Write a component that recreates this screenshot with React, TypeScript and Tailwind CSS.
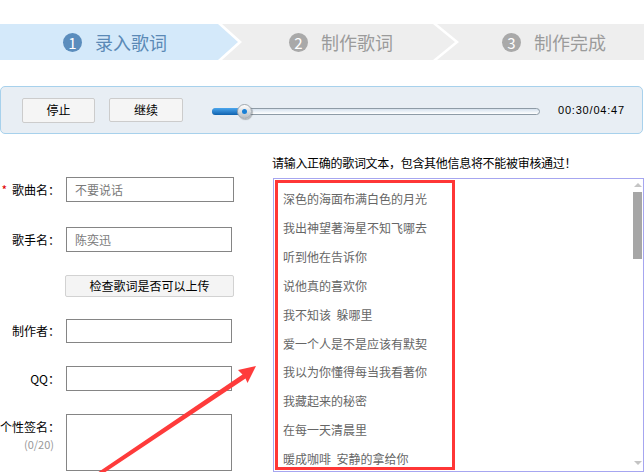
import React from "react";

const lyrics = [
  "深色的海面布满白色的月光",
  "我出神望著海星不知飞哪去",
  "听到他在告诉你",
  "说他真的喜欢你",
  "我不知该  躲哪里",
  "爱一个人是不是应该有默契",
  "我以为你懂得每当我看著你",
  "我藏起来的秘密",
  "在每一天清晨里",
  "暖成咖啡  安静的拿给你",
];

function Row({
  label,
  required,
  inputW,
  value,
  mt,
  h,
}: {
  label: string;
  required?: boolean;
  inputW: number;
  value?: string;
  mt: string;
  h: string;
}) {
  return (
    <div className={`flex items-center ${mt}`}>
      <div className="w-[60px] text-right text-[12px] leading-[16px] text-black whitespace-nowrap">
        {required && <span className="text-[#e00000] mr-[5px]">*</span>}
        {label}
      </div>
      <div
        className={`ml-[6px] ${h} border border-[#858585] bg-white flex items-center pl-[8px] text-[12px] text-[#7a7a7a]`}
        style={{ width: inputW }}
      >
        {value}
      </div>
    </div>
  );
}

export default function App() {
  return (
    <div
      className="relative w-[644px] h-[472px] overflow-hidden bg-white"
      style={{ fontFamily: '"Noto Sans CJK SC", "Noto Sans", sans-serif' }}
    >
      {/* Steps */}
      <div className="mt-[24px] h-[36px] flex">
        <div className="w-[238px] h-full shrink-0 bg-[#d4e9fa] [clip-path:polygon(0_0,218px_0,238px_50%,218px_100%,0_100%)] flex items-center pl-[63px]">
          <div className="w-[19px] h-[19px] rounded-full bg-[#5b8dbd] text-white text-[15px] flex items-center justify-center leading-none">
            1
          </div>
          <span className="ml-[13px] text-[18px] text-[#5b89b6] leading-none">录入歌词</span>
        </div>
        <div className="ml-[-16px] w-[233px] h-full shrink-0 bg-[#eeeeee] [clip-path:polygon(0_0,211px_0,233px_50%,211px_100%,0_100%,20px_50%)] flex items-center pl-[67px]">
          <div className="w-[19px] h-[19px] rounded-full bg-[#a9a9a9] text-white text-[15px] flex items-center justify-center leading-none">
            2
          </div>
          <span className="ml-[13px] text-[18px] text-[#9b9b9b] leading-none">制作歌词</span>
        </div>
        <div className="ml-[-18px] flex-1 h-full bg-[#eeeeee] [clip-path:polygon(0_0,100%_0,100%_100%,0_100%,22px_50%)] flex items-center pl-[65px]">
          <div className="w-[19px] h-[19px] rounded-full bg-[#a9a9a9] text-white text-[15px] flex items-center justify-center leading-none">
            3
          </div>
          <span className="ml-[13px] text-[18px] text-[#9b9b9b] leading-none">制作完成</span>
        </div>
      </div>

      {/* Control panel */}
      <div className="mt-[26px] mr-[1px] h-[48px] rounded-[5px] border border-[#a7d1ec] bg-[#e8eef4] flex items-center pl-[21px]">
        <button className="w-[73px] h-[25px] bg-[#f5f5f5] border border-[#cccccc] rounded-[2px] text-[12px] text-black">
          停止
        </button>
        <button className="ml-[14px] w-[74px] h-[24px] bg-[#f5f5f5] border border-[#cccccc] rounded-[2px] text-[12px] text-black">
          继续
        </button>
        <div className="ml-[29px] relative w-[328px] h-[7px] mt-[2px]">
          <div className="absolute inset-0 rounded-full border border-[#8e9ba6] bg-linear-to-b from-[#d6e2ee] to-[#ffffff]" />
          <div className="absolute left-0 top-0 h-[7px] w-[34px] rounded-l-full bg-linear-to-b from-[#4aa6ee] to-[#0d62ae]" />
          <div className="absolute left-[25px] top-[-4px] w-[15px] h-[15px] rounded-full border border-[#a1a8ae] bg-linear-to-b from-[#ffffff] to-[#b7bcc1] shadow-[1px_1px_1px_rgba(0,0,0,0.25)] flex items-center justify-center">
            <div className="w-[5px] h-[5px] rounded-full bg-[#1a80d6]" />
          </div>
        </div>
        <span
          className="ml-[18px] text-[11px] tracking-[0.8px] text-black"
          style={{ fontFamily: '"Liberation Sans", sans-serif' }}
        >
          00:30/04:47
        </span>
      </div>

      {/* Main */}
      <div className="flex">
        <div className="w-[272px] shrink-0 flex flex-col">
          <Row label="歌曲名：" required inputW={168} value="不要说话" mt="mt-[43px]" h="h-[25px]" />
          <Row label="歌手名：" inputW={166} value="陈奕迅" mt="mt-[25px]" h="h-[25px]" />
          <div className="mt-[23px] ml-[65px] flex">
            <button className="w-[169px] h-[22px] bg-[#f4f4f4] border border-[#d2d2d2] rounded-[2px] text-[12px] text-black leading-none">
              检查歌词是否可以上传
            </button>
          </div>
          <Row label="制作者：" inputW={166} mt="mt-[22px]" h="h-[24px]" />
          <Row label="QQ：" inputW={166} mt="mt-[23px]" h="h-[25px]" />
          <div className="flex mt-[23px]">
            <div className="w-[60px] flex flex-col items-end pt-[5px]">
              <span className="text-[12px] leading-[16px] text-black whitespace-nowrap">个性签名：</span>
              <span className="text-[11px] leading-[14px] text-[#999999] pr-[6px] mt-[2px]">(0/20)</span>
            </div>
            <div className="ml-[6px] w-[166px] h-[57px] border border-[#858585] bg-white" />
          </div>
        </div>

        <div className="flex-1 flex flex-col">
          <div className="mt-[21px] text-[12px] leading-[16px] text-black whitespace-nowrap tracking-[-0.3px]">
            请输入正确的歌词文本，包含其他信息将不能被审核通过！
          </div>
          <div className="mt-[7px] ml-[1px] h-[294px] border border-[#a6a6f0] bg-white flex">
            <div className="ml-[1px] mt-[1px] w-[180px] h-[290px] border-[3px] border-[#ff3636] pl-[5px] pt-[2px] flex flex-col">
              {lyrics.map((l) => (
                <div key={l} className="text-[12px] leading-[28.9px] text-[#666666] whitespace-pre">
                  {l}
                </div>
              ))}
            </div>
            <div className="flex-1" />
            <div className="w-[9px] mr-[1px] flex flex-col items-center">
              <div className="mt-[4px] w-0 h-0 border-l-[4px] border-r-[4px] border-b-[4px] border-l-transparent border-r-transparent border-b-[#c4c4c4]" />
              <div className="mt-[5px] w-[9px] h-[67px] bg-[#a6a6a6]" />
              <div className="flex-1" />
              <div className="mb-[6px] w-0 h-0 border-l-[4px] border-r-[4px] border-t-[4px] border-l-transparent border-r-transparent border-t-[#c4c4c4]" />
            </div>
          </div>
        </div>
      </div>

      {/* Red annotation arrow */}
      <svg
        className="absolute left-0 top-0 pointer-events-none"
        width="644"
        height="472"
        viewBox="0 0 644 472"
      >
        <polygon
          points="256,366 238,370 242.5,374.5 97,473 104,473 245.5,378.5 247.5,383"
          fill="#fe3b3b"
        />
      </svg>
    </div>
  );
}
